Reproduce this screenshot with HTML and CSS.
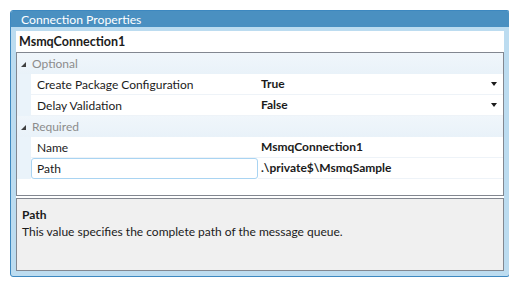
FILE: index.html
```html
<!DOCTYPE html>
<html lang="en">
<head>
    <meta charset="UTF-8">
    <title>Connection Properties</title>
    <link rel="stylesheet" href="styles.css">
</head>
<body>

    <div class="window">
        <div class="titlebar">Connection Properties</div>
        <div class="frame">
            <div class="object-name">MsmqConnection1</div>

            <div class="grid">
                <div class="category">
                    <span class="expander"></span>
                    <span class="category-label">Optional</span>
                </div>
                <div class="prop">
                    <div class="gutter"></div>
                    <div class="name">Create Package Configuration</div>
                    <div class="value">True<span class="dropdown"></span></div>
                </div>
                <div class="prop">
                    <div class="gutter"></div>
                    <div class="name">Delay Validation</div>
                    <div class="value">False<span class="dropdown"></span></div>
                </div>

                <div class="category">
                    <span class="expander"></span>
                    <span class="category-label">Required</span>
                </div>
                <div class="prop">
                    <div class="gutter"></div>
                    <div class="name">Name</div>
                    <div class="value">MsmqConnection1</div>
                </div>
                <div class="prop">
                    <div class="gutter"></div>
                    <div class="name selected">Path</div>
                    <div class="value">.\private$\MsmqSample</div>
                </div>
            </div>

            <div class="description">
                <div class="desc-title">Path</div>
                <div class="desc-text">This value specifies the complete path of the message queue.</div>
            </div>
        </div>
    </div>

</body>
</html>
```

FILE: styles.css
```css
body {
    margin: 10px;
    background: #ffffff;
    font-family: Lato, "Open Sans", sans-serif;
    font-size: 12px;
    color: #1b1b1b;
}

.window {
    width: 500px;
    height: 267px;
    box-sizing: border-box;
    border: 1px solid #3d88c0;
    border-radius: 3px;
    background: #bcdcf0;
    display: flex;
    flex-direction: column;
    overflow: hidden;
}

.titlebar {
    height: 16px;
    line-height: 17px;
    padding-left: 10px;
    background: #4a90c1;
    color: #ffffff;
    font-size: 12.2px;
}

.frame {
    flex: 1;
    margin: 4px 5px 5px 5px;
    background: #ffffff;
    display: flex;
    flex-direction: column;
}

.object-name {
    height: 21px;
    line-height: 22px;
    padding-left: 3px;
    font-size: 12.5px;
    font-weight: bold;
}

.grid {
    height: 144px;
    box-sizing: border-box;
    border: 1px solid #828790;
    background: #ffffff;
}

.category {
    height: 21px;
    display: flex;
    align-items: center;
    background: linear-gradient(#f0f6fb, #e9f2f9);
}

.expander {
    width: 0;
    height: 0;
    margin: 1px 6px 0 4px;
    border-left: 5px solid transparent;
    border-bottom: 5px solid #404040;
}

.category-label {
    color: #8c8c8c;
    line-height: 22px;
}

.prop {
    height: 21px;
    display: flex;
}

.gutter {
    width: 14px;
    background: #eaf3fa;
}

.name {
    width: 227px;
    box-sizing: border-box;
    padding-left: 6px;
    line-height: 22px;
    border-bottom: 1px solid #eef3f8;
}

.name.selected {
    border: 1px solid #a9d4f2;
    border-radius: 3px;
    padding-left: 5px;
    line-height: 20px;
}

.value {
    flex: 1;
    box-sizing: border-box;
    padding-left: 3px;
    padding-right: 6px;
    line-height: 22px;
    font-weight: bold;
    border-bottom: 1px solid #eef3f8;
    display: flex;
    align-items: center;
    justify-content: space-between;
}

.dropdown {
    width: 0;
    height: 0;
    border-left: 3px solid transparent;
    border-right: 3px solid transparent;
    border-top: 4px solid #1b1b1b;
}

.description {
    flex: 1;
    margin-top: 2px;
    border: 1px solid #828790;
    background: #f0f0f0;
    padding: 7px 5px;
}

.desc-title {
    font-weight: bold;
    line-height: 17px;
}

.desc-text {
    line-height: 18px;
}
```
